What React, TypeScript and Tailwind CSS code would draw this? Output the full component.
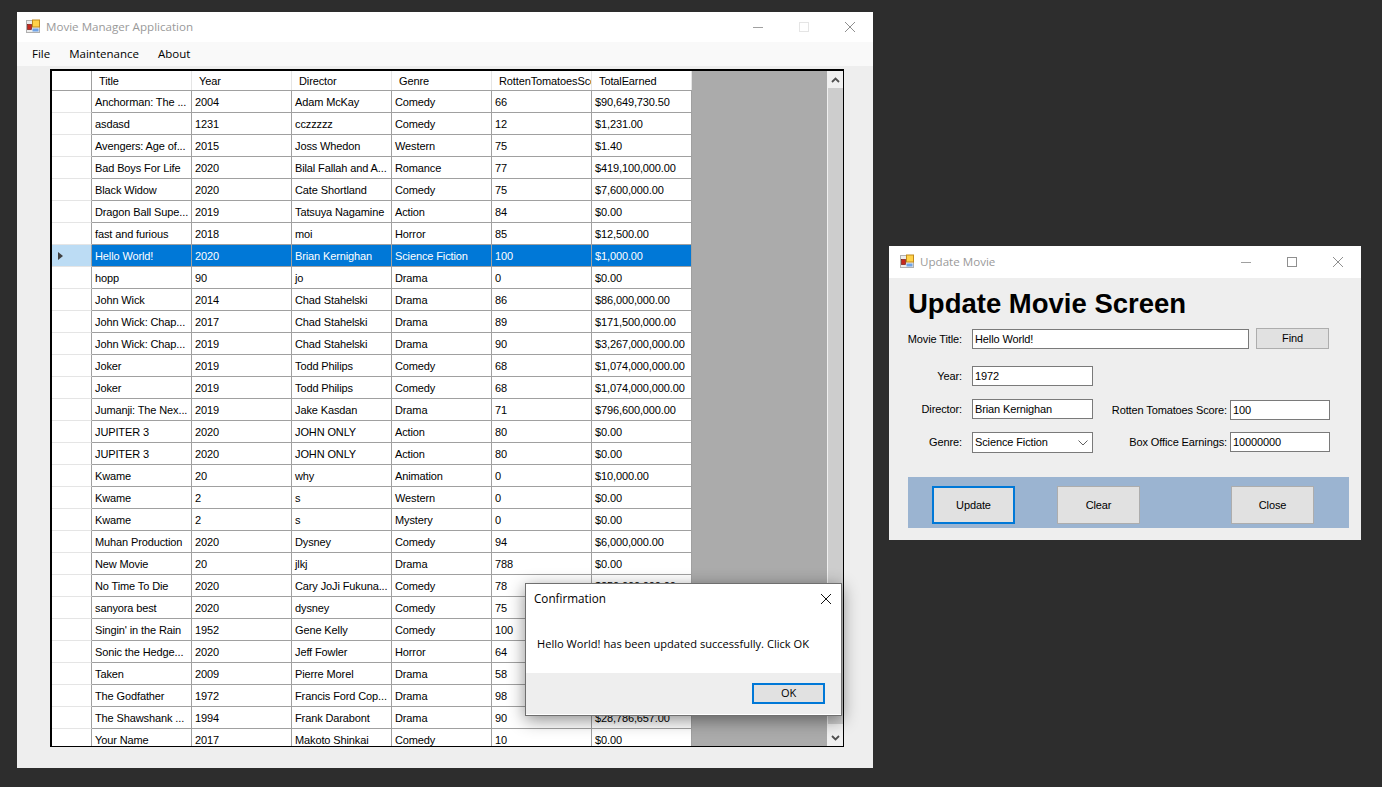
const rows = [
  ['Anchorman: The ...', '2004', 'Adam McKay', 'Comedy', '66', '$90,649,730.50'],
  ['asdasd', '1231', 'cczzzzz', 'Comedy', '12', '$1,231.00'],
  ['Avengers: Age of...', '2015', 'Joss Whedon', 'Western', '75', '$1.40'],
  ['Bad Boys For Life', '2020', 'Bilal Fallah and A...', 'Romance', '77', '$419,100,000.00'],
  ['Black Widow', '2020', 'Cate Shortland', 'Comedy', '75', '$7,600,000.00'],
  ['Dragon Ball Supe...', '2019', 'Tatsuya Nagamine', 'Action', '84', '$0.00'],
  ['fast and furious', '2018', 'moi', 'Horror', '85', '$12,500.00'],
  ['Hello World!', '2020', 'Brian Kernighan', 'Science Fiction', '100', '$1,000.00'],
  ['hopp', '90', 'jo', 'Drama', '0', '$0.00'],
  ['John Wick', '2014', 'Chad Stahelski', 'Drama', '86', '$86,000,000.00'],
  ['John Wick: Chap...', '2017', 'Chad Stahelski', 'Drama', '89', '$171,500,000.00'],
  ['John Wick: Chap...', '2019', 'Chad Stahelski', 'Drama', '90', '$3,267,000,000.00'],
  ['Joker', '2019', 'Todd Philips', 'Comedy', '68', '$1,074,000,000.00'],
  ['Joker', '2019', 'Todd Philips', 'Comedy', '68', '$1,074,000,000.00'],
  ['Jumanji: The Nex...', '2019', 'Jake Kasdan', 'Drama', '71', '$796,600,000.00'],
  ['JUPITER 3', '2020', 'JOHN ONLY', 'Action', '80', '$0.00'],
  ['JUPITER 3', '2020', 'JOHN ONLY', 'Action', '80', '$0.00'],
  ['Kwame', '20', 'why', 'Animation', '0', '$10,000.00'],
  ['Kwame', '2', 's', 'Western', '0', '$0.00'],
  ['Kwame', '2', 's', 'Mystery', '0', '$0.00'],
  ['Muhan Production', '2020', 'Dysney', 'Comedy', '94', '$6,000,000.00'],
  ['New Movie', '20', 'jlkj', 'Drama', '788', '$0.00'],
  ['No Time To Die', '2020', 'Cary JoJi Fukuna...', 'Comedy', '78', '$250,000,000.00'],
  ['sanyora best', '2020', 'dysney', 'Comedy', '75', '$0.00'],
  ["Singin' in the Rain", '1952', 'Gene Kelly', 'Comedy', '100', '$0.00'],
  ['Sonic the Hedge...', '2020', 'Jeff Fowler', 'Horror', '64', '$0.00'],
  ['Taken', '2009', 'Pierre Morel', 'Drama', '58', '$0.00'],
  ['The Godfather', '1972', 'Francis Ford Cop...', 'Drama', '98', '$0.00'],
  ['The Shawshank ...', '1994', 'Frank Darabont', 'Drama', '90', '$28,786,657.00'],
  ['Your Name', '2017', 'Makoto Shinkai', 'Comedy', '10', '$0.00'],
];

const headers = ['Title', 'Year', 'Director', 'Genre', 'RottenTomatoesScore', 'TotalEarned'];

function AppIcon() {
  return (
    <svg width="15" height="15" viewBox="0 0 15 15" className="shrink-0">
      <rect x="0.5" y="1.5" width="13" height="12" fill="#ececec" stroke="#b0b0b0" />
      <rect x="1.5" y="5.5" width="4" height="5" fill="#c8281e" stroke="#7a1a14" strokeWidth="0.7" />
      <rect x="6.5" y="1" width="7" height="7" fill="#ffd24a" stroke="#c08a1c" />
      <rect x="6.5" y="9.5" width="6" height="3" fill="#6fa3e8" />
    </svg>
  );
}

function Controls({ maxColor }: { maxColor: string }) {
  return (
    <div className="flex items-center">
      <svg width="12" height="12" viewBox="0 0 12 12" className="mr-[34px]">
        <path d="M1 6.5h10" stroke="#a0a0a0" fill="none" />
      </svg>
      <svg width="12" height="12" viewBox="0 0 12 12" className="mr-[34px]">
        <rect x="1.5" y="1.5" width="9" height="9" stroke={maxColor} fill="none" />
      </svg>
      <svg width="12" height="12" viewBox="0 0 12 12">
        <path d="M1 1l10 10M11 1L1 11" stroke="#8f8f8f" fill="none" />
      </svg>
    </div>
  );
}

function TextBox({ value, className }: { value: string; className: string }) {
  return (
    <div className={`flex h-[20px] items-center border border-[#7a7a7a] bg-white pl-[2px] text-[11px] tracking-[-0.12px] text-black ${className}`}>
      {value}
    </div>
  );
}

function FlatButton({ label, className }: { label: string; className: string }) {
  return (
    <div className={`flex items-center justify-center bg-[#e1e1e1] text-[11px] tracking-[-0.12px] text-black ${className}`}>
      {label}
    </div>
  );
}

function MovieGrid() {
  return (
    <div className="ml-[33px] mt-[3px] flex h-[678px] w-[794px] overflow-hidden border-b border-l-2 border-r border-t-2 border-black bg-[#ababab]">
      <div className="flex-1 overflow-hidden text-[11px] leading-[23px] tracking-[-0.12px] text-black">
        <div className="flex h-[20px] w-[640px] border-b border-[#a0a0a0] bg-white">
          <div className="w-[40px] border-r border-[#a0a0a0]" />
          {headers.map((h) => (
            <div key={h} className="w-[100px] overflow-hidden whitespace-nowrap border-r border-[#e5e5e5] pl-[7px] leading-[21px]">
              {h}
            </div>
          ))}
        </div>
        {rows.map((row, i) => {
          const selected = i === 7;
          return (
            <div key={i} className="flex h-[22px] w-[640px]">
              <div className={`flex w-[40px] items-center border-b border-r border-b-[#e5e5e5] border-r-[#a0a0a0] pl-[6px] ${selected ? 'bg-[#bcdcf4]' : 'bg-white'}`}>
                {selected && <div className="h-0 w-0 border-y-[4.5px] border-l-[5px] border-y-transparent border-l-[#404040]" />}
              </div>
              {row.map((cell, j) => (
                <div
                  key={j}
                  className={`w-[100px] overflow-hidden whitespace-nowrap border-b border-r border-[#a0a0a0] pl-[3px] ${
                    selected ? 'bg-[#0078d7] text-white' : 'bg-white'
                  }`}
                >
                  {cell}
                </div>
              ))}
            </div>
          );
        })}
      </div>
      <div className="flex w-[16px] flex-col border-l border-[#f0f0f0] bg-[#f0f0f0]">
        <div className="flex h-[17px] items-center justify-center">
          <svg width="9" height="6" viewBox="0 0 9 6">
            <path d="M1 5l3.5-3.5L8 5" stroke="#505050" strokeWidth="1.8" fill="none" />
          </svg>
        </div>
        <div className="h-[636px] bg-[#cdcdcd]" />
        <div className="flex-1" />
        <div className="flex h-[17px] items-center justify-center">
          <svg width="9" height="6" viewBox="0 0 9 6">
            <path d="M1 1l3.5 3.5L8 1" stroke="#505050" strokeWidth="1.8" fill="none" />
          </svg>
        </div>
      </div>
    </div>
  );
}

function FormRow({ label, children, className }: { label: string; children: React.ReactNode; className?: string }) {
  return (
    <div className={`flex items-center ${className ?? ''}`}>
      <div className="flex w-[54px] shrink-0 justify-end whitespace-nowrap text-[11px] tracking-[-0.12px] text-black">{label}</div>
      {children}
    </div>
  );
}

export default function App() {
  return (
    <div className="relative h-[787px] w-[1382px] overflow-hidden bg-[#2d2d2d] font-['Liberation_Sans',Arial,sans-serif]">
      {/* main window */}
      <div className="absolute left-[17px] top-[12px] h-[756px] w-[856px] bg-[#eeeeee]">
        <div className="flex h-[30px] items-center justify-between bg-white pl-[9px] pr-[17px]">
          <div className="flex items-center gap-[5px] font-['Open_Sans',sans-serif] text-[11.6px] text-[#9a9a9a]">
            <AppIcon />
            <span>Movie Manager Application</span>
          </div>
          <Controls maxColor="#e5e5e5" />
        </div>
        <div className="flex h-[24px] items-center gap-[19px] bg-[#f9f9f9] pl-[15px] font-['Open_Sans',sans-serif] text-[11.5px] text-black">
          <span>File</span>
          <span>Maintenance</span>
          <span>About</span>
        </div>
        <MovieGrid />
      </div>

      {/* update window */}
      <div className="absolute left-[889px] top-[246px] h-[294px] w-[472px] bg-[#eeeeee]">
        <div className="flex h-[32px] items-center justify-between bg-white pl-[11px] pr-[17px]">
          <div className="flex items-center gap-[5px] font-['Open_Sans',sans-serif] text-[11.6px] text-[#9a9a9a]">
            <AppIcon />
            <span>Update Movie</span>
          </div>
          <Controls maxColor="#8f8f8f" />
        </div>
        <div className="pl-[19px] pr-[12px]">
          <h1 className="mt-[10px] h-[41px] text-[27.5px] font-bold leading-[32px] text-black">Update Movie Screen</h1>
          <FormRow label="Movie Title:" className="h-[20px]">
            <TextBox value="Hello World!" className="ml-[10px] w-[277px]" />
            <FlatButton label="Find" className="-mt-[1px] ml-[7px] h-[21px] w-[73px] border border-[#adadad]" />
          </FormRow>
          <FormRow label="Year:" className="mt-[17px]">
            <TextBox value="1972" className="ml-[10px] w-[121px]" />
          </FormRow>
          <div className="mt-[13px] flex">
            <div className="flex w-[319px] flex-col gap-[13px]">
              <FormRow label="Director:">
                <TextBox value="Brian Kernighan" className="ml-[10px] w-[121px]" />
              </FormRow>
              <FormRow label="Genre:">
                <div className="ml-[10px] flex h-[21px] w-[121px] items-center justify-between border border-[#7a7a7a] bg-white pl-[2px] pr-[4px] text-[11px] tracking-[-0.12px] text-black">
                  Science Fiction
                  <svg width="10" height="6" viewBox="0 0 10 6">
                    <path d="M0.5 0.5L5 5l4.5-4.5" stroke="#606060" fill="none" />
                  </svg>
                </div>
              </FormRow>
            </div>
            <div className="flex flex-col gap-[12px] pt-[1px]">
              <div className="flex items-center">
                <div className="flex w-0 justify-end whitespace-nowrap text-[11px] tracking-[-0.12px] text-black">Rotten Tomatoes Score:</div>
                <TextBox value="100" className="ml-[3px] w-[100px]" />
              </div>
              <div className="flex items-center">
                <div className="flex w-0 justify-end whitespace-nowrap text-[11px] tracking-[-0.12px] text-black">Box Office Earnings:</div>
                <TextBox value="10000000" className="ml-[3px] w-[100px]" />
              </div>
            </div>
          </div>
          <div className="mt-[24px] flex h-[51px] items-start bg-[#9bb4d1] pl-[24px] pt-[9px]">
            <FlatButton label="Update" className="h-[38px] w-[83px] border-2 border-[#0078d7]" />
            <FlatButton label="Clear" className="ml-[42px] h-[38px] w-[83px] border border-[#adadad]" />
            <FlatButton label="Close" className="ml-[91px] h-[38px] w-[83px] border border-[#adadad]" />
          </div>
        </div>
      </div>

      {/* confirmation dialog */}
      <div className="absolute left-[525px] top-[583px] h-[133px] w-[317px] border border-[#6f6f6f] bg-white font-['Open_Sans',sans-serif] text-black shadow-[0_4px_16px_rgba(0,0,0,0.45)]">
        <div className="flex h-[30px] items-center justify-between pl-[8px] pr-[9px] text-[11.7px]">
          <span>Confirmation</span>
          <svg width="12" height="12" viewBox="0 0 12 12">
            <path d="M1 1l10 10M11 1L1 11" stroke="#111111" fill="none" />
          </svg>
        </div>
        <div className="flex h-[59px] items-center pl-[11px] pt-[2px] text-[11.1px]">
          Hello World! has been updated successfully. Click OK
        </div>
        <div className="flex h-[41px] items-center justify-end bg-[#eeeeee] pr-[16px]">
          <FlatButton label="OK" className="h-[21px] w-[73px] border-2 border-[#0078d7]" />
        </div>
      </div>
    </div>
  );
}
